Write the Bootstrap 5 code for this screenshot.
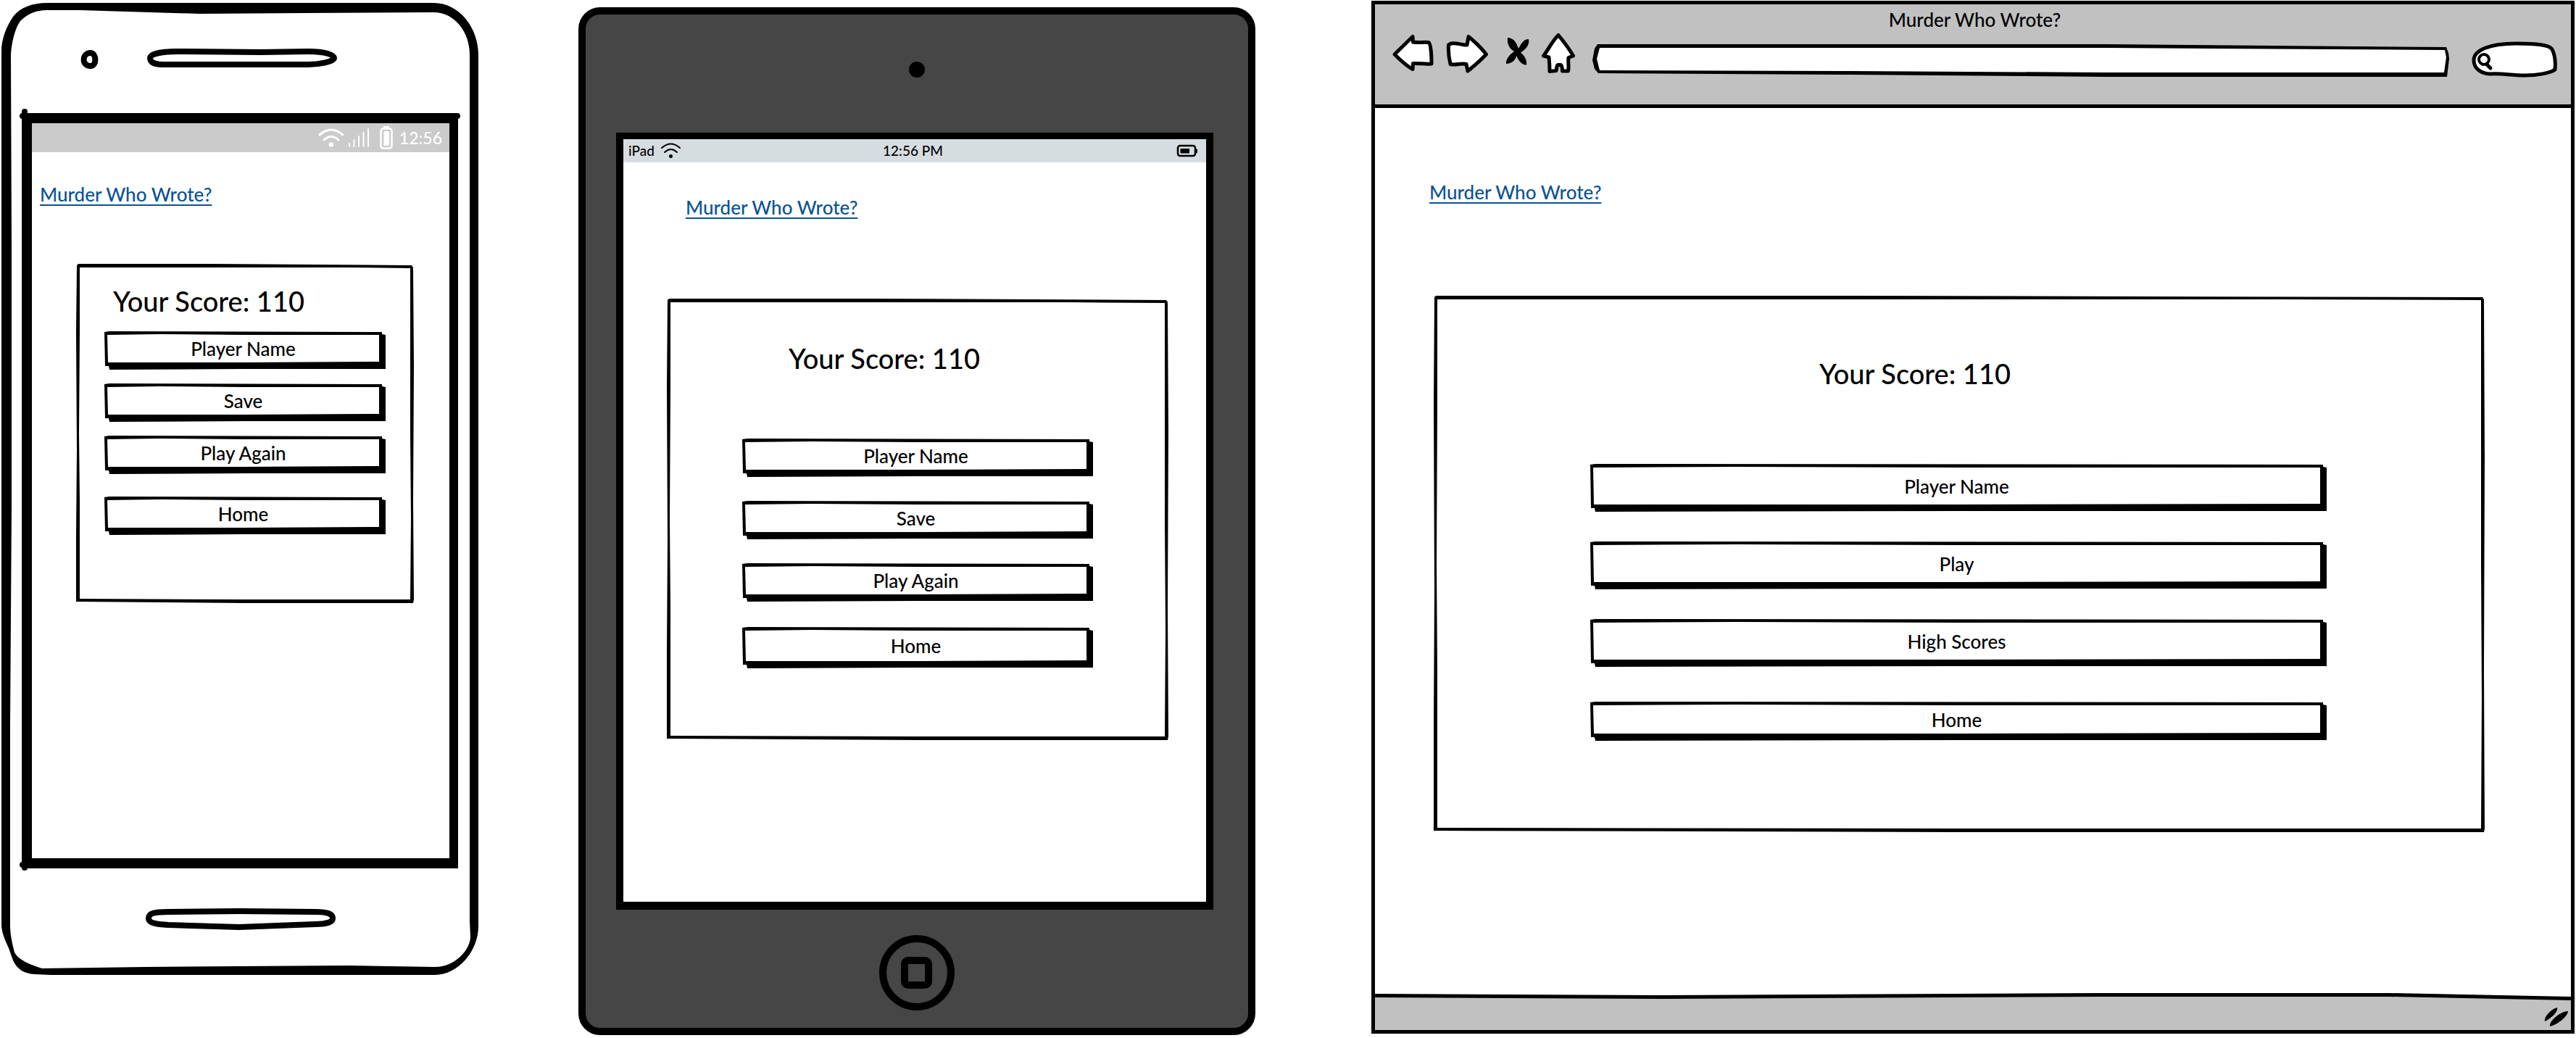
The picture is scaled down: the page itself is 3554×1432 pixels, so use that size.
<!DOCTYPE html>
<html lang="en">
<head>
<meta charset="utf-8">
<meta name="viewport" content="width=device-width, initial-scale=1">
<title>Murder Who Wrote?</title>
<link href="https://cdn.jsdelivr.net/npm/bootstrap@5.3.0/dist/css/bootstrap.min.css" rel="stylesheet">
<style>
  body { font-family: Lato, "Open Sans", sans-serif; font-size: 26px; font-weight: 500; line-height: 30px; color: #000; background: #fff; }
  .board { grid-template-columns: minmax(0, 796fr) minmax(0, 1094fr) minmax(0, 1660fr); padding: 0 2px; }

  /* shared pieces */
  .title-link { color: #0b5394; text-decoration: underline; text-decoration-thickness: 2px; text-underline-offset: 4px; text-decoration-skip-ink: none; }
  .score { font-size: 38px; line-height: 46px; font-weight: 500; }
  .sketch { position: relative; z-index: 0; }
  .sketch::before, .sketch::after { content: ""; position: absolute; inset: 0; z-index: -1; }
  .sketch::before { background: #000; }
  .sketch::after { background: #fff; }

  .panel::before { clip-path: polygon(1px 2px, 3px 0, 40% 0, calc(100% - 3px) 2px, calc(100% - 1px) 5px, 100% 30%, calc(100% - 1px) 70%, 100% calc(100% - 5px), calc(100% - 1px) 100%, 50% 100%, 0 calc(100% - 2px), 0 80%, 1px 55%, 0 20%); }
  .panel::after { clip-path: polygon(5px 5px, 45% 5px, 80% 5px, calc(100% - 5px) 6px, calc(100% - 5px) 50%, calc(100% - 4px) 75%, calc(100% - 5px) calc(100% - 5px), 50% calc(100% - 5px), 5px calc(100% - 6px), 5px 70%, 4px 50%, 5px 20%); }

  .btn-sketch { --bs-btn-color: #000; --bs-btn-hover-color: #000; --bs-btn-active-color: #000; --bs-btn-border-width: 0px; --bs-btn-padding-y: 0px; --bs-btn-font-size: 26px; --bs-btn-font-weight: 500; --bs-btn-line-height: 30px; height: var(--key-h); }
  .btn-sketch::before { inset: 0 -5px -5px 0; clip-path: polygon(0 1px, 7px 0, calc(100% - 5px) 1px, calc(100% - 5px) 4px, 100% 5px, 100% calc(100% - 1px), 50% calc(100% - 1px), 7px 100%, 6px calc(100% - 5px), 1px calc(100% - 5px)); }
  .btn-sketch::after { clip-path: polygon(4px 5px, 20% 4px, 50% 5px, calc(100% - 4px) 5px, calc(100% - 4px) calc(100% - 6px), 50% calc(100% - 5px), 5px calc(100% - 5px)); }
  .keys { gap: var(--key-gap); }

  /* phone */
  .phone { margin: 4px 138px 0 0; padding: 152px 28px 147px; --key-h: 48px; --key-gap: 24px; }
  .phone-frame { position: absolute; inset: 0; width: 100%; height: 100%; z-index: -1; overflow: visible; }
  .phone-screen { border: solid #000; border-width: 14px 12px 14px 14px; background: #fff; padding-bottom: 352px; }
  .phone-status { height: 40px; padding-right: 10px; background: #cbcbcb; color: #fff; font-size: 23px; }
  .phone-top { padding: 43px 11px 81px; }
  .phone-panel { margin: 0 49px 0 61px; min-height: 468px; padding: 28px 44px 0 39px; }
  .phone-panel .score { margin: 0 0 19px 12px; }
  .phone-panel .last-key { margin-top: 12px; }

  /* tablet */
  .tablet { margin: 10px 160px 0 0; border: 10px solid #000; border-radius: 30px; background: #464646; padding: 0 48px 0 42px; --key-h: 48px; --key-gap: 38px; }
  .tablet-head { height: 163px; padding: 65px 0 0 6px; }
  .lens { width: 22px; height: 22px; background: #000; }
  .tablet-screen { border: solid #000; border-width: 9px 10px 11px; background: #fff; padding-bottom: 223px; }
  .tablet-status { height: 32px; padding: 0 12px 0 7px; background: #d6dde0; font-size: 19px; }
  .tablet-top { padding: 47px 86px 111px; }
  .tablet-panel { margin: 0 52px 0 60px; min-height: 609px; padding: 59px 109px 0 104px; }
  .tablet-panel .score { margin: 0 0 88px 64px; }
  .tablet-panel .last-key { margin-top: 2px; height: 52px; }
  .tablet-foot { height: 163px; padding: 35px 0 0 6px; }

  /* browser window */
  .window { margin-top: 1px; border: 5px solid #000; background: #fff; --key-h: 61px; --key-gap: 46px; }
  .chrome { background: #c1c1c1; border-bottom: 5px solid #000; padding: 6px 18px 37px 23px; }
  .tools { gap: 10px; margin-top: 3px; }
  .url { height: 45px; margin: 0 19px 1px 12px; }
  .url::before { clip-path: polygon(7px 0, 60% 0, calc(100% - 4px) 4px, calc(100% - 1px) 12px, 100% 20px, calc(100% - 3px) 100%, 60% 100%, 30% 42px, 8px 40px, 3px 34px, 0 22px, 3px 6px); }
  .url::after { clip-path: polygon(10px 5px, 60% 5px, calc(100% - 6px) 8px, calc(100% - 4px) 18px, calc(100% - 7px) 39px, 60% 39px, 30% 37px, 10px 36px, 6px 20px); }
  .bare { border: 0; background: transparent; outline: 0; }
  .search { width: 121px; height: 62px; }
  .search-art { position: absolute; inset: 0; z-index: -1; }
  .window-top { padding: 101px 75px 128px; }
  .window-panel { margin: 0 119px 222px 81px; min-height: 740px; padding: 84px 223px 0 216px; }
  .window-panel .score { margin: 0 0 102px 316px; }
  .window-panel .last-key { margin-top: 7px; height: 49px; }
  .window-foot { height: 51px; }
  .ink { fill: none; stroke: #000; stroke-linecap: round; stroke-linejoin: round; }
  .paper { fill: #fff; stroke: #000; stroke-width: 5; stroke-linejoin: round; }
</style>
<script src="https://cdn.jsdelivr.net/npm/bootstrap@5.3.0/dist/js/bootstrap.bundle.min.js"></script>
</head>
<body>
<main class="board d-grid align-items-start">

  <section class="phone position-relative z-0" aria-label="Phone">
    <svg class="phone-frame" viewBox="2 4 658 1341" preserveAspectRatio="none" aria-hidden="true">
      <path fill-rule="evenodd" d="M65 4H598C635 4 660 40 660 75V1278C660 1312 632 1345 600 1345H70L48 1344C32 1343 24 1337 18 1325L12 1308C6 1295 2 1285 2 1275V70C2 55 8 38 18 23C28 10 45 4 65 4ZM65 14L110 14L275 19L420 18L598 17C628 17 648 45 648 75V1270L649 1292C649 1310 628 1334 600 1334L480 1332L200 1334L58 1336C42 1331 25 1324 20 1314C17 1302 14 1290 14 1278V1000L16 700V340L15 75C16 60 20 40 28 29C38 19 50 14 65 14Z"/>
      <path class="ink" stroke-width="8" d="M125 73C133 73 134 91 125 91C112 91 113 73 125 73Z"/>
      <path class="ink" stroke-width="8" d="M207 80C207 74 225 71 245 71L360 72L425 71C450 71 461 76 461 80C461 85 440 89 425 89H228C212 89 207 86 207 80Z"/>
      <path class="ink" stroke-width="8" d="M205 1267C205 1260 212 1258 232 1258L330 1257L435 1258C453 1258 459 1261 459 1267C459 1272 450 1275 435 1275L330 1279L232 1276C215 1275 205 1273 205 1267Z"/>
      <circle cx="34" cy="154" r="4"/><circle cx="31" cy="160" r="4"/><circle cx="631" cy="160" r="4"/><circle cx="31" cy="1193" r="4"/><circle cx="34" cy="1197" r="4"/>
    </svg>
    <div class="phone-screen">
      <div class="phone-status d-flex align-items-center justify-content-end">
        <svg width="104" height="32" viewBox="440 174 104 32" aria-hidden="true">
          <g fill="none" stroke="#fff" stroke-width="3" stroke-linecap="round"><path d="M442 186Q458 172 474 186M448 193Q458 184 468 193"/><path stroke-width="2" d="M483 198V202M489.500 193V202M496 188V202M502.500 183V202M509 178V202"/></g>
          <circle cx="458" cy="199.500" r="3.300" fill="#fff"/>
          <rect x="526.500" y="177.500" width="15" height="27" rx="3" fill="none" stroke="#fff" stroke-width="2.500"/><path fill="#fff" d="M530 177V174H538V177ZM530.500 181H538V201H530.500Z"/>
        </svg>
        <span class="ms-2">12:56</span>
      </div>
      <div class="phone-top d-flex"><a href="#" class="title-link">Murder Who Wrote?</a></div>
      <div class="sketch panel phone-panel">
        <h2 class="score">Your Score: 110</h2>
        <div class="keys d-flex flex-column">
          <button type="button" class="btn btn-sketch sketch">Player Name</button>
          <button type="button" class="btn btn-sketch sketch">Save</button>
          <button type="button" class="btn btn-sketch sketch">Play Again</button>
          <button type="button" class="btn btn-sketch sketch last-key">Home</button>
        </div>
      </div>
    </div>
  </section>

  <section class="tablet" aria-label="Tablet">
    <div class="tablet-head d-flex justify-content-center"><span class="lens rounded-circle"></span></div>
    <div class="tablet-screen">
      <div class="tablet-status d-flex align-items-center">
        <div class="col d-flex align-items-center gap-2"><span>iPad</span>
          <svg width="30" height="22" viewBox="914 197 30 22" aria-hidden="true"><path class="ink" stroke-width="2" d="M916 204Q928.500 193 941 204M920 210Q928.500 202 937 210"/><circle cx="928.500" cy="215.500" r="2.500"/></svg>
        </div>
        <div>12:56 PM</div>
        <div class="col d-flex justify-content-end">
          <svg width="29" height="18" viewBox="1623 199 29 18" aria-hidden="true"><rect class="ink" x="1625" y="201" width="24" height="14" rx="3" stroke-width="2.500"/><path d="M1628.500 205H1641V211.500H1628.500ZM1649 204.500L1652 206V210.500L1649 212Z"/></svg>
        </div>
      </div>
      <div class="tablet-top d-flex"><a href="#" class="title-link">Murder Who Wrote?</a></div>
      <div class="sketch panel tablet-panel">
        <h2 class="score">Your Score: 110</h2>
        <div class="keys d-flex flex-column">
          <button type="button" class="btn btn-sketch sketch">Player Name</button>
          <button type="button" class="btn btn-sketch sketch">Save</button>
          <button type="button" class="btn btn-sketch sketch">Play Again</button>
          <button type="button" class="btn btn-sketch sketch last-key">Home</button>
        </div>
      </div>
    </div>
    <div class="tablet-foot d-flex justify-content-center align-items-start">
      <button type="button" class="bare p-0 d-flex" aria-label="Home button">
        <svg width="104" height="104" viewBox="0 0 104 104" aria-hidden="true"><circle class="ink" cx="52" cy="52" r="47" stroke-width="10"/><rect class="ink" x="35" y="35" width="33" height="34" rx="5" stroke-width="10"/><path fill="#464646" d="M40 40H63V64H40Z"/></svg>
      </button>
    </div>
  </section>

  <section class="window" aria-label="Browser window">
    <div class="chrome">
      <div class="text-center">Murder Who Wrote?</div>
      <div class="tools d-flex align-items-end">
        <button type="button" class="bare p-0 d-flex" aria-label="Back"><svg width="64" height="62" viewBox="1920 45 64 62"><path class="paper" d="M1924 75L1949 50.500L1949.500 58C1957 59.500 1964 57.500 1971 58.500C1974 60 1975 75 1975 88C1967 89 1958 87 1949.500 87.500L1949 95.500C1939 90 1932 83 1924 75Z"/></svg></button>
        <button type="button" class="bare p-0 d-flex" aria-label="Forward"><svg width="68" height="62" viewBox="1994 45 68 62"><path class="paper" d="M2002 60C2010 58.500 2017 62.500 2024 62L2026 50.500C2034 57 2043 65 2050.500 75C2042 84 2034 91 2025 98L2023 88.500C2016 86.500 2008 90.500 2001 88.500C1999 80 1998 70 1998.500 62Z"/></svg></button>
        <button type="button" class="bare p-0 d-flex" aria-label="Stop"><svg width="45" height="62" viewBox="2072 45 45 62"><path d="M2080 52C2090 52 2093 62 2095 67C2099 60 2102 54 2109 54C2111 62 2104 69 2098 72.500C2104 77 2107 84 2106 89.500C2099 90 2094 82 2092.500 77C2090 84 2085 88 2078 88C2077 82 2083 75 2089 71C2082 67 2079 60 2080 52Z"/></svg></button>
        <button type="button" class="bare p-0 d-flex" aria-label="Start page"><svg width="48" height="62" viewBox="2127 45 48 62"><path class="paper" d="M2150 48.500C2158 58 2164 66 2170.500 77L2164 79.500C2163 86 2165 92 2163.500 98H2155.500C2155.500 94 2155 90 2153 89.500H2149.500C2147 91 2148 95 2147 97.500L2138 98.500C2138 92 2137.500 84 2137 79L2129.500 77C2137 67 2142 56 2150 48.500Z"/></svg></button>
        <div class="sketch url flex-grow-1"><input type="text" class="bare w-100 h-100 px-3" aria-label="Address"></div>
        <div class="position-relative z-0 search">
          <svg class="search-art" width="121" height="62" viewBox="3408 45 121 62" aria-hidden="true"><path class="paper" d="M3413 83C3413 69 3435 60 3472 60C3500 60 3517 62 3521 68C3525 76 3526 86 3525 96C3518 101 3500 104 3484 104C3465 104 3450 101 3437 102C3425 102 3413 96 3413 83Z"/><circle class="ink" cx="3427" cy="82" r="7" stroke-width="4"/><path class="ink" stroke-width="5" d="M3431 89L3436 94"/></svg>
          <input type="search" class="bare w-100 h-100 ps-5 pe-3" aria-label="Search">
        </div>
      </div>
    </div>
    <div class="window-top d-flex"><a href="#" class="title-link">Murder Who Wrote?</a></div>
    <div class="sketch panel window-panel">
      <h2 class="score">Your Score: 110</h2>
      <div class="keys d-flex flex-column">
        <button type="button" class="btn btn-sketch sketch">Player Name</button>
        <button type="button" class="btn btn-sketch sketch">Play</button>
        <button type="button" class="btn btn-sketch sketch">High Scores</button>
        <button type="button" class="btn btn-sketch sketch last-key">Home</button>
      </div>
    </div>
    <div class="window-foot position-relative z-0 d-flex justify-content-end">
      <svg class="position-absolute top-0 start-0 w-100 h-100 z-n1" viewBox="0 0 1650 51" preserveAspectRatio="none" aria-hidden="true"><path fill="#c1c1c1" d="M0 3L1400 3L1650 8V51H0Z"/><path d="M0 1L400 3L1000 0L1400 0L1650 5V10L1400 5L1000 5L400 8L0 6Z"/></svg>
      <svg width="38" height="51" viewBox="3509 1370 38 51" aria-hidden="true"><path d="M3511 1409C3510 1402 3520 1392 3528 1390C3530 1395 3520 1405 3511 1409ZM3518 1416C3517 1408 3533 1395 3543 1395C3543 1402 3528 1414 3518 1416Z"/></svg>
    </div>
  </section>

</main>
</body>
</html>
